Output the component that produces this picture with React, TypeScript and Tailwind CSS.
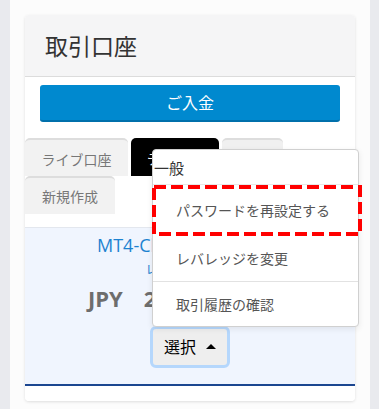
import React from "react";

export default function App() {
  return (
    <div className="min-h-[409px] w-[379px] bg-[#e9eaee] font-['Open_Sans','Noto_Sans_CJK_JP',sans-serif]">
      <div className="ml-[10px] w-[360px] min-h-[409px] bg-[#fcfcfc] px-[15px] pt-[15px]">
        <div className="relative w-[330px] rounded-[4px] bg-white shadow-[0_1px_3px_rgba(0,0,0,0.12)]">
          {/* header */}
          <div className="flex h-[62px] items-center rounded-t-[4px] border-b border-[#dcdcdc] bg-[#f5f5f6] px-5 pt-[1px] text-[23px] text-[#333]">
            取引口座
          </div>
          {/* deposit button */}
          <div className="px-[15px] pt-2">
            <div className="flex h-[37px] w-full items-center justify-center rounded-[3px] border-b-2 border-[#0070ab] bg-[#0089cf] text-[16px] text-white">
              ご入金
            </div>
          </div>
          {/* tabs */}
          <div className="mt-4">
            <div className="flex h-[38px] gap-[3px]">
              <div className="flex w-[103px] items-center justify-center rounded-t-[5px] border-t-2 border-[#dddddd] bg-[#f2f2f2] pt-[2px] text-[14px] text-[#777]">
                ライブ口座
              </div>
              <div className="flex w-[88px] items-center justify-center rounded-t-[5px] bg-black pt-[2px] text-[14px] text-white">
                デモ口座
              </div>
              <div className="flex w-[61px] items-center justify-center rounded-t-[5px] border-t-2 border-[#dddddd] bg-[#f0f0f0] text-[14px] text-[#777]" />
            </div>
            <div className="flex h-[38px]">
              <div className="flex w-[90px] items-center justify-center rounded-t-[5px] border-t-2 border-[#dddddd] bg-[#f2f2f2] pt-[1px] text-[14px] text-[#777]">
                新規作成
              </div>
            </div>
          </div>
          <div className="h-[14px] border-b border-[#e3e7ee] bg-white" />
          {/* account panel */}
          <div className="flex h-[156px] flex-col bg-[#f0f5fe] pt-[4px]">
            <div className="pl-[72px] text-[18px] leading-[27px] text-[#1d82d0]">
              MT4-Classic 12345678
            </div>
            <div className="mt-[2px] text-center text-[12px] leading-[18px] text-[#1d82d0]">
              レバレッジ 25倍
            </div>
            <div className="mt-[4px] flex pl-[63px] text-[22px] font-bold leading-[30px] text-[#6d6d6d]">
              <span>JPY</span>
              <span className="ml-[21px]">2,000,000</span>
            </div>
            <div className="mt-[13px] flex justify-center">
              <div className="flex h-[42px] w-[80px] items-center justify-center gap-[10px] rounded-[6px] border-[3px] border-[#b5d7fc] bg-[#eeeeee] text-[16px] text-black">
                <span>選択</span>
                <span className="mt-[-2px] h-0 w-0 border-x-[5px] border-b-[5px] border-x-transparent border-b-black" />
              </div>
            </div>
          </div>
          <div className="h-[2px] bg-[#1b4690]" />
          <div className="h-[15px] rounded-b-[4px] bg-white" />

          {/* dropdown */}
          <div className="absolute left-[127px] top-[134px] w-[207px] rounded-[4px] border border-[#d0d0d0] bg-white shadow-[0_2px_6px_rgba(0,0,0,0.08)]">
            <div className="flex h-[34px] items-center pl-[1px] pt-[3px] text-[15px] text-[#333]">一般</div>
            <div className="relative flex h-[51px] items-center border-t border-[#e8e8e8] pl-[23px] text-[14px] text-[#555]">
              パスワードを再設定する
              <svg
                className="absolute -left-[1px] top-0"
                width="210"
                height="51"
                viewBox="0 0 210 51"
              >
                <rect
                  x="2"
                  y="2"
                  width="206"
                  height="47"
                  fill="none"
                  stroke="#ff0000"
                  strokeWidth="4"
                  strokeDasharray="12 5"
                />
              </svg>
            </div>
            <div className="flex h-[46px] items-center pl-[23px] text-[14px] text-[#555]">
              レバレッジを変更
            </div>
            <div className="h-px bg-[#e2e2e2]" />
            <div className="flex h-[44px] items-center pl-[23px] text-[14px] text-[#555]">
              取引履歴の確認
            </div>
          </div>
        </div>
      </div>
    </div>
  );
}
